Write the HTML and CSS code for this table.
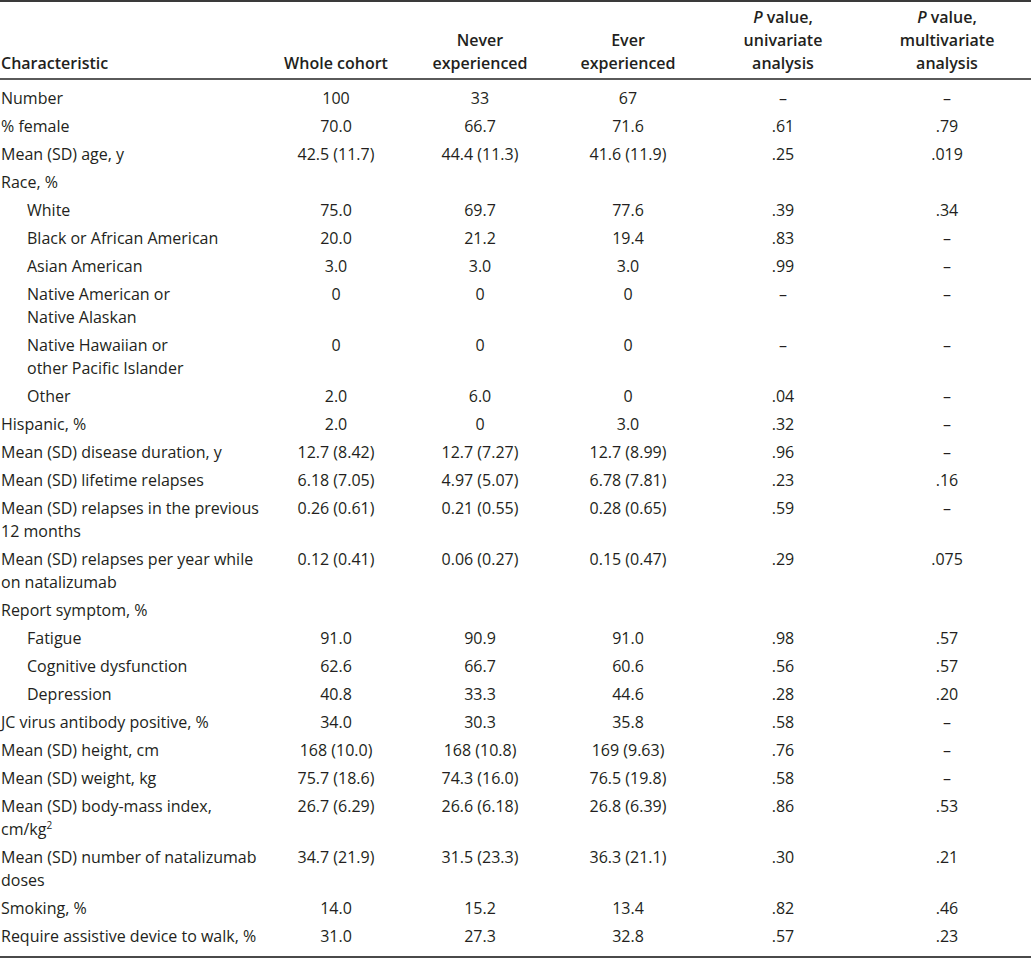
FILE: index.html
```html
<!DOCTYPE html>
<html lang="en">
<head>
<meta charset="utf-8">
<title>Characteristics table</title>
<link rel="stylesheet" href="styles.css">
</head>
<body>
<table class="data">
  <colgroup>
    <col class="c-char">
    <col class="c-whole">
    <col class="c-never">
    <col class="c-ever">
    <col class="c-puni">
    <col class="c-pmulti">
  </colgroup>
  <thead>
    <tr>
      <th class="lbl">Characteristic</th>
      <th>Whole cohort</th>
      <th>Never<br>experienced</th>
      <th>Ever<br>experienced</th>
      <th><i>P</i> value,<br>univariate<br>analysis</th>
      <th class="last"><i>P</i> value,<br>multivariate<br>analysis</th>
    </tr>
  </thead>
  <tbody>
    <tr class="first"><td class="lbl">Number</td><td>100</td><td>33</td><td>67</td><td>–</td><td class="last">–</td></tr>
    <tr><td class="lbl">% female</td><td>70.0</td><td>66.7</td><td>71.6</td><td>.61</td><td class="last">.79</td></tr>
    <tr><td class="lbl">Mean (SD) age, y</td><td>42.5 (11.7)</td><td>44.4 (11.3)</td><td>41.6 (11.9)</td><td>.25</td><td class="last">.019</td></tr>
    <tr><td class="lbl">Race, %</td><td></td><td></td><td></td><td></td><td class="last"></td></tr>
    <tr><td class="lbl sub">White</td><td>75.0</td><td>69.7</td><td>77.6</td><td>.39</td><td class="last">.34</td></tr>
    <tr><td class="lbl sub">Black or African American</td><td>20.0</td><td>21.2</td><td>19.4</td><td>.83</td><td class="last">–</td></tr>
    <tr><td class="lbl sub">Asian American</td><td>3.0</td><td>3.0</td><td>3.0</td><td>.99</td><td class="last">–</td></tr>
    <tr><td class="lbl sub">Native American or<br>Native Alaskan</td><td>0</td><td>0</td><td>0</td><td>–</td><td class="last">–</td></tr>
    <tr><td class="lbl sub">Native Hawaiian or<br>other Pacific Islander</td><td>0</td><td>0</td><td>0</td><td>–</td><td class="last">–</td></tr>
    <tr><td class="lbl sub">Other</td><td>2.0</td><td>6.0</td><td>0</td><td>.04</td><td class="last">–</td></tr>
    <tr><td class="lbl">Hispanic, %</td><td>2.0</td><td>0</td><td>3.0</td><td>.32</td><td class="last">–</td></tr>
    <tr><td class="lbl">Mean (SD) disease duration, y</td><td>12.7 (8.42)</td><td>12.7 (7.27)</td><td>12.7 (8.99)</td><td>.96</td><td class="last">–</td></tr>
    <tr><td class="lbl">Mean (SD) lifetime relapses</td><td>6.18 (7.05)</td><td>4.97 (5.07)</td><td>6.78 (7.81)</td><td>.23</td><td class="last">.16</td></tr>
    <tr><td class="lbl">Mean (SD) relapses in the previous<br>12 months</td><td>0.26 (0.61)</td><td>0.21 (0.55)</td><td>0.28 (0.65)</td><td>.59</td><td class="last">–</td></tr>
    <tr><td class="lbl">Mean (SD) relapses per year while<br>on natalizumab</td><td>0.12 (0.41)</td><td>0.06 (0.27)</td><td>0.15 (0.47)</td><td>.29</td><td class="last">.075</td></tr>
    <tr><td class="lbl">Report symptom, %</td><td></td><td></td><td></td><td></td><td class="last"></td></tr>
    <tr><td class="lbl sub">Fatigue</td><td>91.0</td><td>90.9</td><td>91.0</td><td>.98</td><td class="last">.57</td></tr>
    <tr><td class="lbl sub">Cognitive dysfunction</td><td>62.6</td><td>66.7</td><td>60.6</td><td>.56</td><td class="last">.57</td></tr>
    <tr><td class="lbl sub">Depression</td><td>40.8</td><td>33.3</td><td>44.6</td><td>.28</td><td class="last">.20</td></tr>
    <tr><td class="lbl">JC virus antibody positive, %</td><td>34.0</td><td>30.3</td><td>35.8</td><td>.58</td><td class="last">–</td></tr>
    <tr><td class="lbl">Mean (SD) height, cm</td><td>168 (10.0)</td><td>168 (10.8)</td><td>169 (9.63)</td><td>.76</td><td class="last">–</td></tr>
    <tr><td class="lbl">Mean (SD) weight, kg</td><td>75.7 (18.6)</td><td>74.3 (16.0)</td><td>76.5 (19.8)</td><td>.58</td><td class="last">–</td></tr>
    <tr><td class="lbl">Mean (SD) body-mass index,<br>cm/kg<sup>2</sup></td><td>26.7 (6.29)</td><td>26.6 (6.18)</td><td>26.8 (6.39)</td><td>.86</td><td class="last">.53</td></tr>
    <tr><td class="lbl">Mean (SD) number of natalizumab<br>doses</td><td>34.7 (21.9)</td><td>31.5 (23.3)</td><td>36.3 (21.1)</td><td>.30</td><td class="last">.21</td></tr>
    <tr><td class="lbl">Smoking, %</td><td>14.0</td><td>15.2</td><td>13.4</td><td>.82</td><td class="last">.46</td></tr>
    <tr class="final"><td class="lbl">Require assistive device to walk, %</td><td>31.0</td><td>27.3</td><td>32.8</td><td>.57</td><td class="last">.23</td></tr>
  </tbody>
</table>
</body>
</html>
```
FILE: styles.css
```css
html, body {
  margin: 0;
  padding: 0;
  background: #ffffff;
}

body {
  font-family: "Open Sans", "Noto Sans", sans-serif;
  font-size: 16px;
  color: #231f20;
}

.data {
  width: 1031px;
  border-collapse: separate;
  border-spacing: 0;
  table-layout: fixed;
}

.c-char { width: 272px; }
.c-whole { width: 128px; }
.c-never { width: 160px; }
.c-ever { width: 136px; }
.c-puni { width: 174px; }
.c-pmulti { width: 161px; }

.data th {
  font-weight: 600;
  line-height: 23px;
  padding: 3.5px 0;
  text-align: center;
  vertical-align: bottom;
  border-top: 2px solid #3a3a3a;
  border-bottom: 2px solid #5a5a5a;
}

.data th i,
.data td i {
  font-style: italic;
}

.data td {
  line-height: 23px;
  padding: 2.5px 0;
  text-align: center;
  vertical-align: top;
  white-space: nowrap;
}

.data .lbl {
  text-align: left;
  padding-left: 1px;
}

.data td.sub {
  padding-left: 27px;
}

.data .last {
  padding-right: 7px;
}

.data tr.first td {
  padding-top: 6.5px;
}

.data tr.final td {
  padding-bottom: 8.5px;
  border-bottom: 2px solid #4a4a4a;
}

.data sup {
  font-size: 10px;
  line-height: 0;
  vertical-align: 6px;
}
```
